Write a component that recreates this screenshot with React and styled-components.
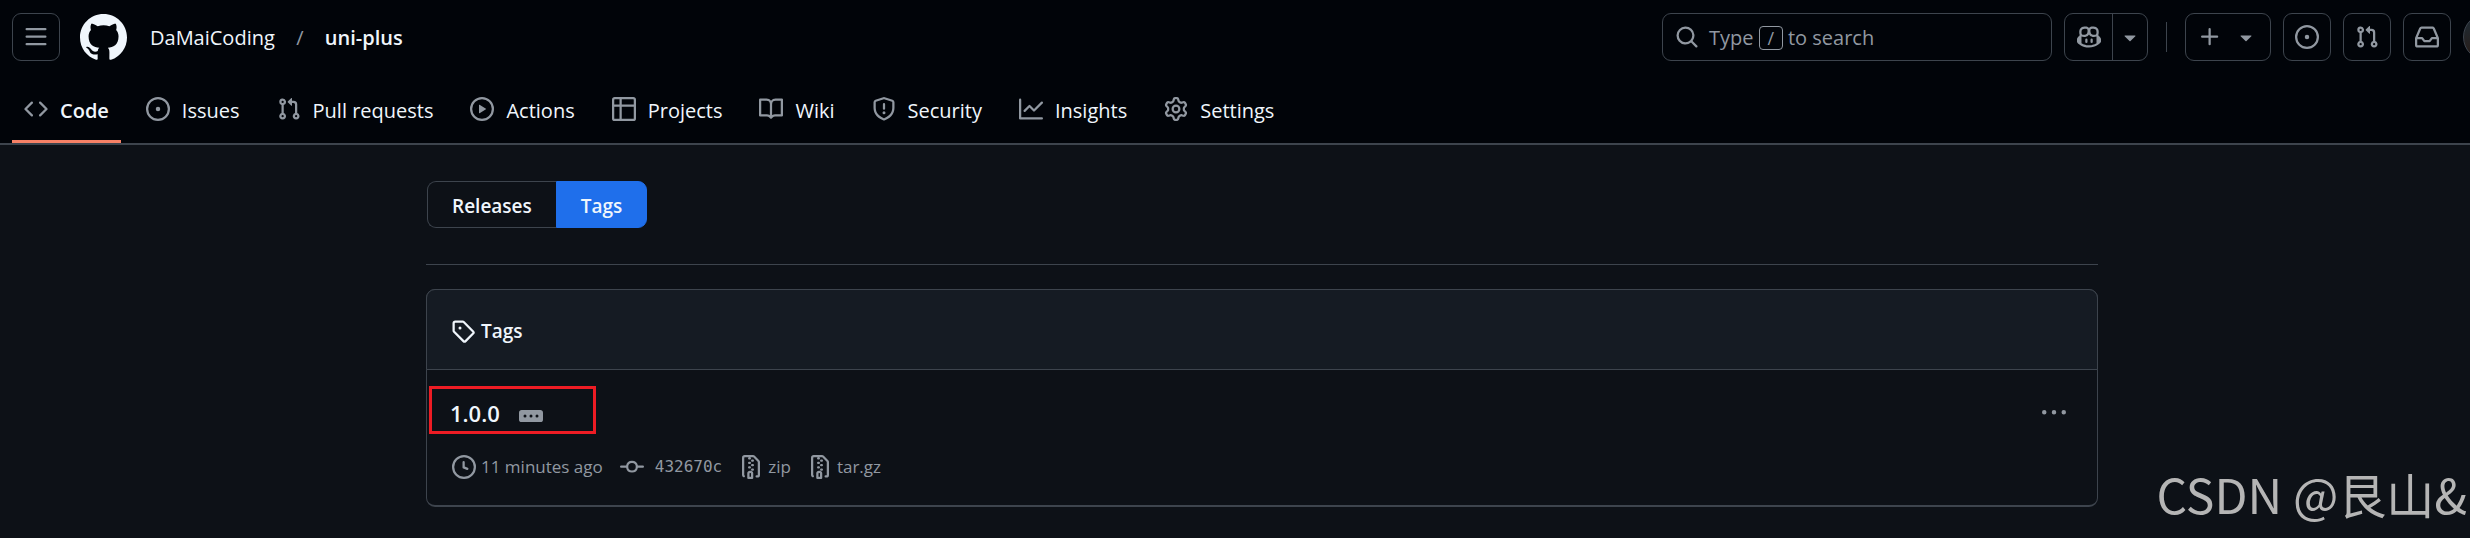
import React from "react";
import styled, { createGlobalStyle } from "styled-components";

const colors = {
  canvas: "#0d1117",
  header: "#010409",
  panel: "#151b23",
  border: "#3d444d",
  text: "#f0f6fc",
  muted: "#9198a1",
  accent: "#1f6feb",
  active: "#f78166",
  mark: "#ed1c24",
};

const paths = {
  bars: "M1 2.75A.75.75 0 0 1 1.75 2h12.5a.75.75 0 0 1 0 1.5H1.75A.75.75 0 0 1 1 2.75Zm0 5A.75.75 0 0 1 1.75 7h12.5a.75.75 0 0 1 0 1.5H1.75A.75.75 0 0 1 1 7.75ZM1.75 12h12.5a.75.75 0 0 1 0 1.5H1.75a.75.75 0 0 1 0-1.5Z",
  github: "M8 0C3.58 0 0 3.58 0 8c0 3.54 2.29 6.53 5.47 7.59.4.07.55-.17.55-.38 0-.19-.01-.82-.01-1.49-2.01.37-2.53-.49-2.69-.94-.09-.23-.48-.94-.82-1.13-.28-.15-.68-.52-.01-.53.63-.01 1.08.58 1.23.82.72 1.21 1.87.87 2.33.66.07-.52.28-.87.51-1.07-1.78-.2-3.64-.89-3.64-3.95 0-.87.31-1.59.82-2.15-.08-.2-.36-1.02.08-2.12 0 0 .67-.21 2.2.82.64-.18 1.32-.27 2-.27.68 0 1.36.09 2 .27 1.53-1.04 2.2-.82 2.2-.82.44 1.1.16 1.92.08 2.12.51.56.82 1.27.82 2.15 0 3.07-1.87 3.75-3.65 3.95.29.25.54.73.54 1.48 0 1.07-.01 1.93-.01 2.2 0 .21.15.46.55.38A8.013 8.013 0 0 0 16 8c0-4.42-3.58-8-8-8z",
  code: "m11.28 3.22 4.25 4.25a.75.75 0 0 1 0 1.06l-4.25 4.25a.749.749 0 0 1-1.275-.326.749.749 0 0 1 .215-.734L13.94 8l-3.72-3.72a.749.749 0 0 1 .326-1.275.749.749 0 0 1 .734.215Zm-6.56 0a.751.751 0 0 1 1.042.018.751.751 0 0 1 .018 1.042L2.06 8l3.72 3.72a.749.749 0 0 1-.326 1.275.749.749 0 0 1-.734-.215L.47 8.53a.75.75 0 0 1 0-1.06Z",
  issue: "M8 9.5a1.5 1.5 0 1 0 0-3 1.5 1.5 0 0 0 0 3ZM8 0a8 8 0 1 1 0 16A8 8 0 0 1 8 0ZM1.5 8a6.5 6.5 0 1 0 13 0 6.5 6.5 0 0 0-13 0Z",
  pull: "M1.5 3.25a2.25 2.25 0 1 1 3 2.122v5.256a2.251 2.251 0 1 1-1.5 0V5.372A2.25 2.25 0 0 1 1.5 3.25Zm5.677-.177L9.573.677A.25.25 0 0 1 10 .854V2.5h1A2.5 2.5 0 0 1 13.5 5v5.628a2.251 2.251 0 1 1-1.5 0V5a1 1 0 0 0-1-1h-1v1.646a.25.25 0 0 1-.427.177L7.177 3.427a.25.25 0 0 1 0-.354ZM3.75 2.5a.75.75 0 1 0 0 1.5.75.75 0 0 0 0-1.5Zm0 9.5a.75.75 0 1 0 0 1.5.75.75 0 0 0 0-1.5Zm8.25.75a.75.75 0 1 0 1.5 0 .75.75 0 0 0-1.5 0Z",
  play: "M8 0a8 8 0 1 1 0 16A8 8 0 0 1 8 0ZM1.5 8a6.5 6.5 0 1 0 13 0 6.5 6.5 0 0 0-13 0Zm4.879-2.773 4.264 2.559a.25.25 0 0 1 0 .428l-4.264 2.559A.25.25 0 0 1 6 10.559V5.442a.25.25 0 0 1 .379-.215Z",
  table: "M0 1.75C0 .784.784 0 1.75 0h12.5C15.216 0 16 .784 16 1.75v12.5A1.75 1.75 0 0 1 14.25 16H1.75A1.75 1.75 0 0 1 0 14.25ZM6.5 6.5v8h7.75a.25.25 0 0 0 .25-.25V6.5Zm8-1.5V1.75a.25.25 0 0 0-.25-.25H6.5V5Zm-13 1.5v7.75c0 .138.112.25.25.25H5v-8ZM5 5V1.5H1.75a.25.25 0 0 0-.25.25V5Z",
  book: "M0 1.75A.75.75 0 0 1 .75 1h4.253c1.227 0 2.317.59 3 1.501A3.743 3.743 0 0 1 11.006 1h4.245a.75.75 0 0 1 .75.75v10.5a.75.75 0 0 1-.75.75h-4.507a2.25 2.25 0 0 0-1.591.659l-.622.621a.75.75 0 0 1-1.06 0l-.622-.621A2.25 2.25 0 0 0 5.258 13H.75a.75.75 0 0 1-.75-.75Zm7.251 10.324.004-5.073-.002-2.253A2.25 2.25 0 0 0 5.003 2.5H1.5v9h3.757a3.75 3.75 0 0 1 1.994.574ZM8.755 4.75l-.004 7.322a3.752 3.752 0 0 1 1.992-.572H14.5v-9h-3.495a2.25 2.25 0 0 0-2.25 2.25Z",
  shield: "M7.467.133a1.748 1.748 0 0 1 1.066 0l5.25 1.68A1.75 1.75 0 0 1 15 3.48V7c0 1.566-.32 3.182-1.303 4.682-.983 1.498-2.585 2.813-5.032 3.855a1.697 1.697 0 0 1-1.33 0c-2.447-1.042-4.049-2.357-5.032-3.855C1.32 10.182 1 8.566 1 7V3.48a1.75 1.75 0 0 1 1.217-1.667Zm.61 1.429a.25.25 0 0 0-.153 0l-5.25 1.68a.25.25 0 0 0-.174.238V7c0 1.358.275 2.666 1.057 3.86.784 1.194 2.121 2.34 4.366 3.297a.196.196 0 0 0 .154 0c2.245-.956 3.582-2.104 4.366-3.298C13.225 9.666 13.5 8.36 13.5 7V3.48a.251.251 0 0 0-.174-.237l-5.25-1.68ZM8.75 4.75v3a.75.75 0 0 1-1.5 0v-3a.75.75 0 0 1 1.5 0ZM9 10.5a1 1 0 1 1-2 0 1 1 0 0 1 2 0Z",
  graph: "M1.5 1.75V13.5h13.75a.75.75 0 0 1 0 1.5H.75a.75.75 0 0 1-.75-.75V1.75a.75.75 0 0 1 1.5 0Zm14.28 2.53-5.25 5.25a.75.75 0 0 1-1.06 0L7 7.06 4.28 9.78a.751.751 0 0 1-1.042-.018.751.751 0 0 1-.018-1.042l3.25-3.25a.75.75 0 0 1 1.06 0L10 7.94l4.72-4.72a.751.751 0 0 1 1.042.018.751.751 0 0 1 .018 1.042Z",
  gear: "M8 0a8.2 8.2 0 0 1 .701.031C9.444.095 9.99.645 10.16 1.29l.288 1.107c.018.066.079.158.212.224.231.114.454.243.668.386.123.082.233.09.299.071l1.103-.303c.644-.176 1.392.021 1.82.63.27.385.506.792.704 1.218.315.675.111 1.422-.364 1.891l-.814.806c-.049.048-.098.147-.088.294.016.257.016.515 0 .772-.01.147.038.246.088.294l.814.806c.475.469.679 1.216.364 1.891a7.977 7.977 0 0 1-.704 1.217c-.428.61-1.176.807-1.82.63l-1.102-.302c-.067-.019-.177-.011-.3.071a5.909 5.909 0 0 1-.668.386c-.133.066-.194.158-.211.224l-.29 1.106c-.168.646-.715 1.196-1.458 1.26a8.006 8.006 0 0 1-1.402 0c-.743-.064-1.289-.614-1.458-1.26l-.289-1.106c-.018-.066-.079-.158-.212-.224a5.738 5.738 0 0 1-.668-.386c-.123-.082-.233-.09-.299-.071l-1.103.303c-.644.176-1.392-.021-1.82-.63a8.12 8.12 0 0 1-.704-1.218c-.315-.675-.111-1.422.363-1.891l.815-.806c.05-.048.098-.147.088-.294a6.214 6.214 0 0 1 0-.772c.01-.147-.038-.246-.088-.294l-.815-.806C.635 6.045.431 5.298.746 4.623a7.92 7.92 0 0 1 .704-1.217c.428-.61 1.176-.807 1.82-.63l1.102.302c.067.019.177.011.3-.071.214-.143.437-.272.668-.386.133-.066.194-.158.211-.224l.29-1.106C6.009.645 6.556.095 7.299.03 7.53.01 7.764 0 8 0Zm-.571 1.525c-.036.003-.108.036-.137.146l-.289 1.105c-.147.561-.549.967-.998 1.189-.173.086-.34.183-.5.29-.417.278-.97.423-1.529.27l-1.103-.303c-.109-.03-.175.016-.195.045-.22.312-.412.644-.573.99-.014.031-.021.11.059.19l.815.806c.411.406.562.957.53 1.456a4.709 4.709 0 0 0 0 .582c.032.499-.119 1.05-.53 1.456l-.815.806c-.081.08-.073.159-.059.19.162.346.353.677.573.989.02.03.085.076.195.046l1.102-.303c.56-.153 1.113-.008 1.53.27.161.107.328.204.501.29.447.222.85.629.997 1.189l.289 1.105c.029.109.101.143.137.146a6.6 6.6 0 0 0 1.142 0c.036-.003.108-.036.137-.146l.289-1.105c.147-.561.549-.967.998-1.189.173-.086.34-.183.5-.29.417-.278.97-.423 1.529-.27l1.103.303c.109.029.175-.016.195-.045.22-.313.411-.644.573-.99.014-.031.021-.11-.059-.19l-.815-.806c-.411-.406-.562-.957-.53-1.456a4.709 4.709 0 0 0 0-.582c-.032-.499.119-1.05.53-1.456l.815-.806c.081-.08.073-.159.059-.19a6.464 6.464 0 0 0-.573-.989c-.02-.03-.085-.076-.195-.046l-1.102.303c-.56.153-1.113.008-1.53-.27a4.44 4.44 0 0 0-.501-.29c-.447-.222-.85-.629-.997-1.189l-.289-1.105c-.029-.11-.101-.143-.137-.146a6.6 6.6 0 0 0-1.142 0ZM11 8a3 3 0 1 1-6 0 3 3 0 0 1 6 0ZM9.5 8a1.5 1.5 0 1 0-3.001.001A1.5 1.5 0 0 0 9.5 8Z",
  search: "M10.68 11.74a6 6 0 0 1-7.922-8.982 6 6 0 0 1 8.982 7.922l3.04 3.04a.749.749 0 0 1-.326 1.275.749.749 0 0 1-.734-.215ZM11.5 7a4.499 4.499 0 1 0-8.997 0A4.499 4.499 0 0 0 11.5 7Z",
  copilot: "M7.998 15.035c-4.562 0-7.873-2.914-7.998-3.749V9.338c.085-.628.677-1.686 1.588-2.065.013-.07.024-.143.036-.218.029-.183.06-.384.126-.612-.201-.508-.254-1.084-.254-1.656 0-.87.128-1.769.693-2.484.579-.733 1.494-1.124 2.724-1.261 1.206-.134 2.262.034 2.944.765.05.053.096.108.139.165.044-.057.094-.112.143-.165.682-.731 1.738-.899 2.944-.765 1.23.137 2.145.528 2.724 1.261.566.715.693 1.614.693 2.484 0 .572-.053 1.148-.254 1.656.066.228.098.429.126.612.012.076.024.148.037.218.924.385 1.522 1.471 1.591 2.095v1.872c0 .766-3.351 3.795-8.002 3.795Zm0-1.485c2.28 0 4.584-1.11 5.002-1.433V7.862l-.023-.116c-.49.21-1.075.291-1.727.291-1.146 0-2.059-.327-2.71-.991A3.222 3.222 0 0 1 8 6.303a3.24 3.24 0 0 1-.544.743c-.65.664-1.563.991-2.71.991-.652 0-1.236-.081-1.727-.291l-.023.116v4.255c.419.323 2.722 1.433 5.002 1.433ZM6.762 2.83c-.193-.206-.637-.413-1.682-.297-1.019.113-1.479.404-1.713.7-.247.312-.369.789-.369 1.554 0 .793.129 1.171.308 1.371.162.181.519.379 1.442.379.853 0 1.339-.235 1.638-.54.315-.322.527-.827.617-1.553.117-.935-.037-1.395-.241-1.614Zm4.155-.297c-1.044-.116-1.488.091-1.681.297-.204.219-.359.679-.242 1.614.091.726.303 1.231.618 1.553.299.305.784.54 1.638.54.922 0 1.28-.198 1.442-.379.179-.2.308-.578.308-1.371 0-.765-.123-1.242-.37-1.554-.233-.296-.693-.587-1.713-.7ZM6.25 9.037a.75.75 0 0 1 .75.75v1.501a.75.75 0 0 1-1.5 0V9.787a.75.75 0 0 1 .75-.75Zm4.25.75v1.501a.75.75 0 0 1-1.5 0V9.787a.75.75 0 0 1 1.5 0Z",
  caret: "m4.427 7.427 3.396 3.396a.25.25 0 0 0 .354 0l3.396-3.396A.25.25 0 0 0 11.396 7H4.604a.25.25 0 0 0-.177.427Z",
  plus: "M7.75 2a.75.75 0 0 1 .75.75V7h4.25a.75.75 0 0 1 0 1.5H8.5v4.25a.75.75 0 0 1-1.5 0V8.5H2.75a.75.75 0 0 1 0-1.5H7V2.75A.75.75 0 0 1 7.75 2Z",
  inbox: "M2.8 2.06A1.75 1.75 0 0 1 4.41 1h7.18c.7 0 1.333.417 1.61 1.06l2.74 6.395c.04.093.06.194.06.295v4.5A1.75 1.75 0 0 1 14.25 15H1.75A1.75 1.75 0 0 1 0 13.25v-4.5c0-.101.02-.202.06-.295Zm1.61.44a.25.25 0 0 0-.23.152L1.887 8H4.75a.75.75 0 0 1 .6.3L6.625 10h2.75l1.275-1.7a.75.75 0 0 1 .6-.3h2.863L11.82 2.652a.25.25 0 0 0-.23-.152Zm10.09 7h-2.875l-1.275 1.7a.75.75 0 0 1-.6.3h-3.5a.75.75 0 0 1-.6-.3L4.375 9.5H1.5v3.75c0 .138.112.25.25.25h12.5a.25.25 0 0 0 .25-.25Z",
  tag: "M1 7.775V2.75C1 1.784 1.784 1 2.75 1h5.025c.464 0 .91.184 1.238.513l6.25 6.25a1.75 1.75 0 0 1 0 2.474l-5.026 5.026a1.75 1.75 0 0 1-2.474 0l-6.25-6.25A1.752 1.752 0 0 1 1 7.775Zm1.5 0c0 .066.026.13.073.177l6.25 6.25a.25.25 0 0 0 .354 0l5.025-5.025a.25.25 0 0 0 0-.354l-6.25-6.25a.25.25 0 0 0-.177-.073H2.75a.25.25 0 0 0-.25.25ZM6 5a1 1 0 1 1 0 2 1 1 0 0 1 0-2Z",
  clock: "M8 0a8 8 0 1 1 0 16A8 8 0 0 1 8 0ZM1.5 8a6.5 6.5 0 1 0 13 0 6.5 6.5 0 0 0-13 0Zm7-3.25v2.992l2.028.812a.75.75 0 0 1-.557 1.392l-2.5-1A.751.751 0 0 1 7 8.25v-3.5a.75.75 0 0 1 1.5 0Z",
  commit: "M11.93 8.5a4.002 4.002 0 0 1-7.86 0H.75a.75.75 0 0 1 0-1.5h3.32a4.002 4.002 0 0 1 7.86 0h3.32a.75.75 0 0 1 0 1.5Zm-1.43-.75a2.5 2.5 0 1 0-5 0 2.5 2.5 0 0 0 5 0Z",
  zip: "M3.5 1.75v11.5c0 .09.048.173.126.217a.75.75 0 0 1-.752 1.298A1.748 1.748 0 0 1 2 13.25V1.75C2 .784 2.784 0 3.75 0h5.586c.464 0 .909.185 1.237.513l2.914 2.914c.329.328.513.773.513 1.237v8.586A1.75 1.75 0 0 1 12.25 15h-.5a.75.75 0 0 1 0-1.5h.5a.25.25 0 0 0 .25-.25V4.664a.25.25 0 0 0-.073-.177L9.513 1.573a.25.25 0 0 0-.177-.073H7.25a.75.75 0 0 1 0 1.5h-.5a.75.75 0 0 1 0-1.5h-3a.25.25 0 0 0-.25.25Zm3.75 8.75h.5c.966 0 1.75.784 1.75 1.75v3a.75.75 0 0 1-.75.75h-2.5a.75.75 0 0 1-.75-.75v-3c0-.966.784-1.75 1.75-1.75ZM6 5.25a.75.75 0 0 1 .75-.75h.5a.75.75 0 0 1 0 1.5h-.5A.75.75 0 0 1 6 5.25Zm.75 2.25h.5a.75.75 0 0 1 0 1.5h-.5a.75.75 0 0 1 0-1.5ZM8 6.75A.75.75 0 0 1 8.75 6h.5a.75.75 0 0 1 0 1.5h-.5A.75.75 0 0 1 8 6.75ZM8.75 3h.5a.75.75 0 0 1 0 1.5h-.5a.75.75 0 0 1 0-1.5ZM8 9.75A.75.75 0 0 1 8.75 9h.5a.75.75 0 0 1 0 1.5h-.5A.75.75 0 0 1 8 9.75Zm-1 2.5v2.25h1v-2.25a.25.25 0 0 0-.25-.25h-.5a.25.25 0 0 0-.25.25Z",
  kebab: "M8 9a1.5 1.5 0 1 0 0-3 1.5 1.5 0 0 0 0 3ZM1.5 9a1.5 1.5 0 1 0 0-3 1.5 1.5 0 0 0 0 3Zm13 0a1.5 1.5 0 1 0 0-3 1.5 1.5 0 0 0 0 3Z",
  ellipsis: "M0 5.75C0 4.784.784 4 1.75 4h12.5c.966 0 1.75.784 1.75 1.75v4.5A1.75 1.75 0 0 1 14.25 12H1.75A1.75 1.75 0 0 1 0 10.25ZM12 7a1 1 0 1 0 0 2 1 1 0 0 0 0-2ZM7 8a1 1 0 1 0 2 0 1 1 0 0 0-2 0ZM4 7a1 1 0 1 0 0 2 1 1 0 0 0 0-2Z",
};

const tabs = [
  { label: "Code", icon: "code", active: true },
  { label: "Issues", icon: "issue" },
  { label: "Pull requests", icon: "pull" },
  { label: "Actions", icon: "play" },
  { label: "Projects", icon: "table" },
  { label: "Wiki", icon: "book" },
  { label: "Security", icon: "shield" },
  { label: "Insights", icon: "graph" },
  { label: "Settings", icon: "gear" },
];

function Icon({ name, size = 24 }) {
  return (
    <Svg viewBox="0 0 16 16" width={size} height={size} fill="currentColor" aria-hidden="true">
      <path fillRule="evenodd" d={paths[name]} />
    </Svg>
  );
}

export default function App() {
  return (
    <>
      <GlobalStyle />
      <Page>
        <Header>
          <TopBar>
            <IconButton aria-label="Open menu"><Icon name="bars" /></IconButton>
            <Logo href="#" aria-label="Homepage"><Icon name="github" size={47} /></Logo>
            <Crumbs aria-label="Breadcrumb">
              <Crumb href="#">DaMaiCoding</Crumb>
              <Slash>/</Slash>
              <Crumb href="#" $current>uni-plus</Crumb>
            </Crumbs>
            <Tools>
              <Search type="button">
                <Icon name="search" />
                <span>Type <Key>/</Key> to search</span>
              </Search>
              <Split>
                <SplitPart $width={47} aria-label="Copilot"><Icon name="copilot" /></SplitPart>
                <SplitPart $width={35} aria-label="Copilot options"><Icon name="caret" /></SplitPart>
              </Split>
              <Divider />
              <CreateButton aria-label="Create new">
                <Icon name="plus" />
                <Icon name="caret" />
              </CreateButton>
              <IconButton aria-label="Your issues"><Icon name="issue" /></IconButton>
              <IconButton aria-label="Your pull requests"><Icon name="pull" /></IconButton>
              <IconButton aria-label="Notifications"><Icon name="inbox" /></IconButton>
              <Avatar aria-label="Account" />
            </Tools>
          </TopBar>
          <TabList aria-label="Repository">
            {tabs.map((tab) => (
              <Tab key={tab.label} href="#" $active={tab.active}>
                <Icon name={tab.icon} />
                <TabText>{tab.label}</TabText>
              </Tab>
            ))}
          </TabList>
        </Header>

        <Main>
          <Subnav>
            <SubnavLink href="#">Releases</SubnavLink>
            <SubnavLink href="#" $selected>Tags</SubnavLink>
          </Subnav>
          <Rule />
          <Box>
            <BoxHeader>
              <Icon name="tag" />
              <BoxTitle>Tags</BoxTitle>
            </BoxHeader>
            <Row>
              <RowTop>
                <Marked>
                  <Version href="#">1.0.0</Version>
                  <PlainButton aria-label="Show message"><Icon name="ellipsis" /></PlainButton>
                </Marked>
                <PlainButton aria-label="Tag options"><Icon name="kebab" /></PlainButton>
              </RowTop>
              <Meta>
                <MetaItem><Icon name="clock" />11 minutes ago</MetaItem>
                <MetaLink href="#" $gap={11}><Icon name="commit" /><Hash>432670c</Hash></MetaLink>
                <MetaLink href="#" $gap={5}><Icon name="zip" />zip</MetaLink>
                <MetaLink href="#" $gap={5}><Icon name="zip" />tar.gz</MetaLink>
              </Meta>
            </Row>
          </Box>
        </Main>
      </Page>
      <Watermark>CSDN @艮山&amp;</Watermark>
    </>
  );
}

const GlobalStyle = createGlobalStyle`
  * {
    box-sizing: border-box;
  }

  body {
    margin: 0;
    background: ${colors.canvas};
    color: ${colors.text};
    font-family: "Open Sans", "Noto Sans", sans-serif;
    font-size: 20px;
    line-height: 30px;
    overflow: hidden;
  }

  a {
    color: inherit;
    text-decoration: none;
  }

  button {
    padding: 0;
    border: 0;
    background: none;
    color: ${colors.muted};
    font: inherit;
    cursor: pointer;
  }
`;

const Svg = styled.svg`
  display: block;
  flex: none;
`;

/* the page runs a little past the right edge of the window */
const Page = styled.div`
  margin-right: -54px;
`;

const Header = styled.header`
  background: ${colors.header};
  border-bottom: 2px solid ${colors.border};
`;

const TopBar = styled.div`
  display: flex;
  align-items: center;
  padding: 13px 13px 12px 12px;
`;

const IconButton = styled.button`
  display: flex;
  align-items: center;
  justify-content: center;
  width: 48px;
  height: 48px;
  border: 1px solid ${colors.border};
  border-radius: 9px;
`;

const Logo = styled.a`
  margin-left: 20px;
`;

const Crumbs = styled.nav`
  display: flex;
  align-items: center;
  margin-left: 23px;
  padding-top: 2px;
`;

const Crumb = styled.a`
  font-weight: ${({ $current }) => ($current ? 600 : 400)};
`;

const Slash = styled.span`
  width: 50px;
  color: ${colors.muted};
  text-align: center;
`;

const Tools = styled.div`
  display: flex;
  align-items: center;
  gap: 12px;
  margin-left: auto;
`;

const Search = styled.button`
  display: flex;
  align-items: center;
  gap: 10px;
  width: 390px;
  height: 48px;
  padding: 0 12px;
  border: 1px solid ${colors.border};
  border-radius: 9px;

  span {
    padding-top: 2px;
  }
`;

const Key = styled.kbd`
  display: inline-block;
  width: 24px;
  border: 1px solid ${colors.muted};
  border-radius: 4px;
  font-family: inherit;
  font-size: 18px;
  line-height: 22px;
  text-align: center;
`;

const Split = styled.div`
  display: flex;
  height: 48px;
  border: 1px solid ${colors.border};
  border-radius: 9px;
`;

const SplitPart = styled.button`
  display: flex;
  align-items: center;
  justify-content: center;
  width: ${({ $width }) => $width}px;

  & + & {
    border-left: 1px solid ${colors.border};
  }
`;

const Divider = styled.div`
  width: 1px;
  height: 30px;
  margin: 0 6px;
  background: ${colors.border};
`;

const CreateButton = styled.button`
  display: flex;
  align-items: center;
  justify-content: space-between;
  width: 86px;
  height: 48px;
  padding: 0 12px;
  border: 1px solid ${colors.border};
  border-radius: 9px;
`;

const Avatar = styled.button`
  width: 48px;
  height: 48px;
  border: 1px solid ${colors.border};
  border-radius: 50%;
  background: linear-gradient(#1c2b36, #2b1d17);
`;

const TabList = styled.nav`
  display: flex;
  gap: 13px;
  padding: 0 12px;
`;

const Tab = styled.a`
  display: flex;
  align-items: center;
  gap: 12px;
  height: 70px;
  padding: 4px 12px 0;
  border-bottom: 3px solid ${({ $active }) => ($active ? colors.active : "transparent")};
  font-weight: ${({ $active }) => ($active ? 600 : 400)};

  svg {
    color: ${colors.muted};
  }
`;

const TabText = styled.span`
  padding-top: 4px;
`;

const Main = styled.main`
  max-width: 1672px;
  margin: 0 auto;
  padding-top: 36px;
`;

const Subnav = styled.nav`
  display: flex;
  padding-left: 1px;
`;

const SubnavLink = styled.a`
  padding: 9px 24px 6px;
  border: 1px solid ${({ $selected }) => ($selected ? colors.accent : colors.border)};
  background: ${({ $selected }) => ($selected ? colors.accent : "transparent")};
  font-size: 19px;
  font-weight: 600;

  &:first-child {
    border-right: 0;
    border-radius: 9px 0 0 9px;
  }

  &:last-child {
    border-radius: 0 9px 9px 0;
  }
`;

const Rule = styled.hr`
  height: 1px;
  margin: 36px 0 24px;
  border: 0;
  background: ${colors.border};
`;

const Box = styled.section`
  border: 1px solid ${colors.border};
  border-bottom-width: 2px;
  border-radius: 9px;
`;

const BoxHeader = styled.div`
  display: flex;
  align-items: center;
  gap: 6px;
  height: 81px;
  margin: -1px -1px 0;
  padding: 2px 24px 0;
  border: 1px solid ${colors.border};
  border-radius: 9px 9px 0 0;
  background: ${colors.panel};
`;

const BoxTitle = styled.h2`
  margin: 0;
  font-size: 19px;
  font-weight: 600;
`;

const Row = styled.div`
  padding: 16px 31px 23px 2px;
`;

const RowTop = styled.div`
  display: flex;
  align-items: center;
  justify-content: space-between;
`;

const Marked = styled.div`
  display: flex;
  align-items: center;
  gap: 19px;
  width: 167px;
  height: 48px;
  padding: 6px 18px 0;
  border: 3px solid ${colors.mark};
`;

const Version = styled.a`
  font-size: 22px;
  font-weight: 600;
`;

const PlainButton = styled.button`
  display: flex;
  padding-top: 5px;
`;

const Meta = styled.div`
  display: flex;
  gap: 17px;
  margin-top: 18px;
  padding-left: 23px;
  color: ${colors.muted};
  font-size: 17px;
`;

const MetaItem = styled.span`
  display: flex;
  align-items: center;
  gap: 5px;
`;

const MetaLink = styled.a`
  display: flex;
  align-items: center;
  gap: ${({ $gap }) => $gap}px;
`;

const Hash = styled.code`
  font-family: "DejaVu Sans Mono", monospace;
  font-size: 16px;
`;

const Watermark = styled.div`
  position: fixed;
  right: 3px;
  bottom: 12px;
  color: #b5b5b5;
  font-family: "Noto Sans CJK SC", sans-serif;
  font-size: 48px;
  font-weight: 400;
  line-height: 66px;
  white-space: nowrap;
`;
